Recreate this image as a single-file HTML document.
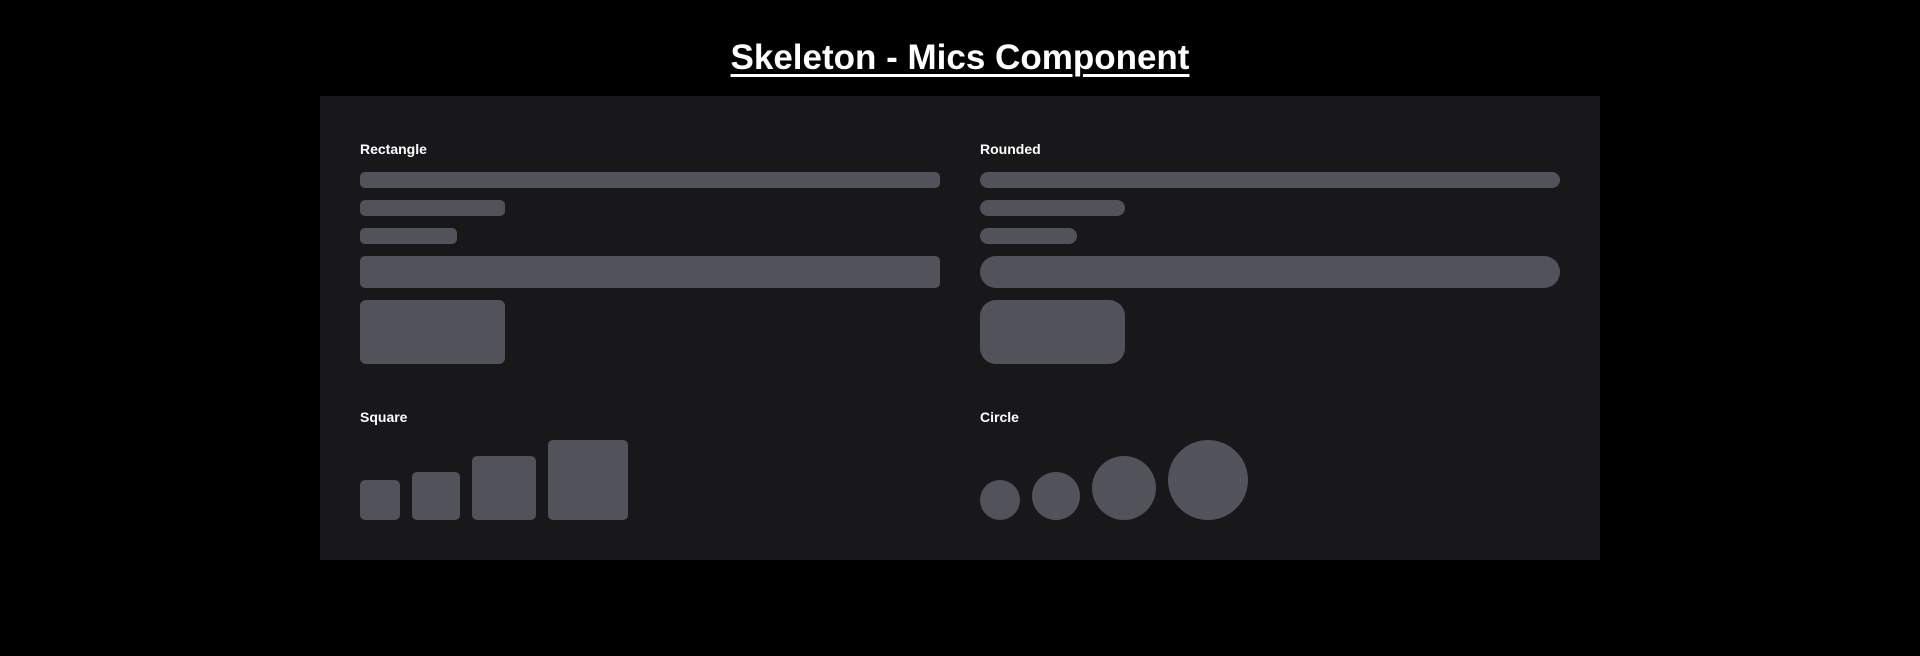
<!DOCTYPE html>
<html><head><style>
html,body{margin:0;padding:0;background:#000;width:1920px;height:656px;overflow:hidden;font-family:"Liberation Sans",sans-serif;color:#fff}
h1{position:absolute;left:0;width:1920px;top:36px;margin:0;text-align:center;font-size:35px;font-weight:bold;text-decoration:underline;text-underline-offset:5px;text-decoration-thickness:3px;line-height:44px}
.panel{position:absolute;left:320px;top:96px;width:1280px;height:464px;background:#18181b}
.s{position:absolute;background:#52525b}
.l{position:absolute;font-size:14px;font-weight:bold;line-height:16px}
</style></head><body>
<h1>Skeleton - Mics Component</h1>
<div class="panel"></div>
<div class="l" style="left:360px;top:141px">Rectangle</div>
<div class="s" style="left:360px;top:172px;width:580px;height:16px;border-radius:5px"></div>
<div class="s" style="left:360px;top:200px;width:145px;height:16px;border-radius:5px"></div>
<div class="s" style="left:360px;top:228px;width:97px;height:16px;border-radius:5px"></div>
<div class="s" style="left:360px;top:256px;width:580px;height:32px;border-radius:5px"></div>
<div class="s" style="left:360px;top:300px;width:145px;height:64px;border-radius:6px"></div>

<div class="l" style="left:980px;top:141px">Rounded</div>
<div class="s" style="left:980px;top:172px;width:580px;height:16px;border-radius:8px"></div>
<div class="s" style="left:980px;top:200px;width:145px;height:16px;border-radius:8px"></div>
<div class="s" style="left:980px;top:228px;width:97px;height:16px;border-radius:8px"></div>
<div class="s" style="left:980px;top:256px;width:580px;height:32px;border-radius:16px"></div>
<div class="s" style="left:980px;top:300px;width:145px;height:64px;border-radius:16px"></div>

<div class="l" style="left:360px;top:409px">Square</div>
<div class="s" style="left:360px;top:480px;width:40px;height:40px;border-radius:5px"></div>
<div class="s" style="left:412px;top:472px;width:48px;height:48px;border-radius:5px"></div>
<div class="s" style="left:472px;top:456px;width:64px;height:64px;border-radius:5px"></div>
<div class="s" style="left:548px;top:440px;width:80px;height:80px;border-radius:5px"></div>

<div class="l" style="left:980px;top:409px">Circle</div>
<div class="s" style="left:980px;top:480px;width:40px;height:40px;border-radius:50%"></div>
<div class="s" style="left:1032px;top:472px;width:48px;height:48px;border-radius:50%"></div>
<div class="s" style="left:1092px;top:456px;width:64px;height:64px;border-radius:50%"></div>
<div class="s" style="left:1168px;top:440px;width:80px;height:80px;border-radius:50%"></div>
</body></html>
